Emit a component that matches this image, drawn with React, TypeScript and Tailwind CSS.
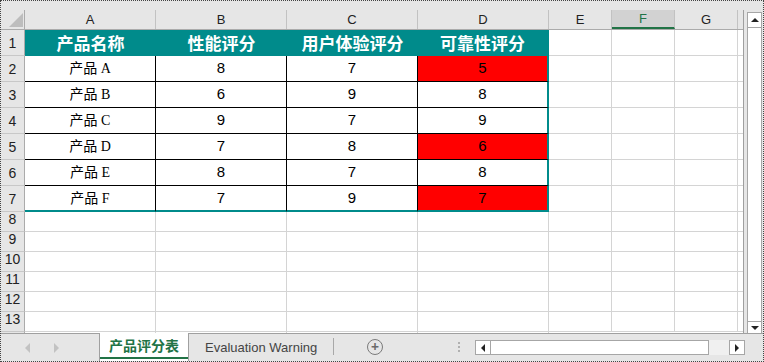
import React from "react";

const cols = [
    { name: "A", w: "w-[131px]" },
    { name: "B", w: "w-[131px]" },
    { name: "C", w: "w-[131px]" },
    { name: "D", w: "w-[131px]" },
    { name: "E", w: "w-[63px]" },
    { name: "F", w: "w-[63px]" },
    { name: "G", w: "w-[63px]" },
];

const headers = ["产品名称", "性能评分", "用户体验评分", "可靠性评分"];

const rows = [
    { name: "产品 A", p: 8, u: 7, r: 5, bad: true },
    { name: "产品 B", p: 6, u: 9, r: 8, bad: false },
    { name: "产品 C", p: 9, u: 7, r: 9, bad: false },
    { name: "产品 D", p: 7, u: 8, r: 6, bad: true },
    { name: "产品 E", p: 8, u: 7, r: 8, bad: false },
    { name: "产品 F", p: 7, u: 9, r: 7, bad: true },
];

const sans = "font-['Liberation_Sans','Noto_Sans_CJK_SC',sans-serif]";
const cjk = "font-['Noto_Sans_CJK_SC',sans-serif]";

const RowHead: React.FC<{ n?: number; h: string }> = ({ n, h }) => (
    <div className={`w-[24px] ${h} shrink-0 bg-[#e6e6e6] border-r border-r-[#ababab] border-b border-b-[#c8c8c8] flex items-end justify-center pb-[1px] text-[14px] text-[#222] ${sans}`}>
        {n}
    </div>
);

const EmptyCells: React.FC = () => (
    <>
        {cols.slice(4).map((c) => (
            <div key={c.name} className={`${c.w} shrink-0 border-r border-b border-[#d4d4d4] bg-white`} />
        ))}
        <div className="flex-1 border-b border-[#d4d4d4] bg-white" />
    </>
);

const App: React.FC = () => {
    return (
        <div className="w-[764px] h-[362px] border border-dotted border-[#444] bg-[#e6e6e6] flex flex-col overflow-hidden">
            <div className="h-[9px] shrink-0" />
            <div className="flex h-[323px] shrink-0">
                {/* Grid */}
                <div className="w-[743px] shrink-0 flex flex-col overflow-hidden border-r border-r-[#9f9f9f] bg-white">
                    {/* column letters */}
                    <div className="flex h-[20px] shrink-0 bg-[#e6e6e6] border-b border-b-[#ababab]">
                        <div className="w-[24px] shrink-0 border-r border-r-[#ababab] relative">
                            <div className="absolute right-[1px] bottom-[2px] w-0 h-0 border-l-[14px] border-l-transparent border-b-[14px] border-b-[#bdbdbd]" />
                        </div>
                        {cols.map((c) => (
                            <div
                                key={c.name}
                                className={`${c.w} shrink-0 border-r border-r-[#c2c2c2] flex items-center justify-center text-[13px] ${sans} ${
                                    c.name === "F" ? "bg-[#d2d2d2] text-[#217346] border-b-2 border-b-[#217346]" : "text-[#222]"
                                }`}
                            >
                                {c.name}
                            </div>
                        ))}
                        <div className="flex-1" />
                    </div>

                    {/* row 1 header */}
                    <div className="flex h-[26px] shrink-0">
                        <RowHead n={1} h="h-[26px]" />
                        {headers.map((t, i) => (
                            <div
                                key={t}
                                className={`w-[131px] shrink-0 bg-[#008b8b] flex items-center justify-center text-white font-bold text-[17px] ${cjk} ${
                                    i === 3 ? "border-r-2 border-r-[#008b8b]" : ""
                                }`}
                            >
                                {t}
                            </div>
                        ))}
                        <EmptyCells />
                    </div>

                    {/* data rows */}
                    {rows.map((r, idx) => {
                        const last = idx === rows.length - 1;
                        const bb = last ? "border-b-2 border-b-[#008b8b]" : "border-b border-b-black";
                        return (
                            <div key={r.name} className="flex h-[26px] shrink-0">
                                <RowHead n={idx + 2} h="h-[26px]" />
                                <div className={`w-[131px] shrink-0 flex items-center justify-center border-r border-r-black ${bb} text-[14px] text-black font-['Liberation_Serif','Noto_Sans_CJK_SC',serif]`}>
                                    {r.name}
                                </div>
                                <div className={`w-[131px] shrink-0 flex items-center justify-center border-r border-r-black ${bb} text-[15px] text-black ${sans}`}>
                                    {r.p}
                                </div>
                                <div className={`w-[131px] shrink-0 flex items-center justify-center border-r border-r-black ${bb} text-[15px] text-black ${sans}`}>
                                    {r.u}
                                </div>
                                <div
                                    className={`w-[131px] shrink-0 flex items-center justify-center border-r-2 border-r-[#008b8b] ${bb} text-[15px] text-black ${sans} ${
                                        r.bad ? "bg-[#ff0000]" : "bg-white"
                                    }`}
                                >
                                    {r.r}
                                </div>
                                <EmptyCells />
                            </div>
                        );
                    })}

                    {/* empty rows */}
                    {[8, 9, 10, 11, 12, 13].map((n) => (
                        <div key={n} className="flex h-[20px] shrink-0">
                            <RowHead n={n} h="h-[20px]" />
                            {cols.slice(0, 4).map((c) => (
                                <div key={c.name} className={`${c.w} shrink-0 border-r border-b border-[#d4d4d4]`} />
                            ))}
                            <EmptyCells />
                        </div>
                    ))}
                    <div className="flex flex-1">
                        <RowHead h="h-full" />
                        {cols.slice(0, 4).map((c) => (
                            <div key={c.name} className={`${c.w} shrink-0 border-r border-[#d4d4d4]`} />
                        ))}
                    </div>
                </div>

                <div className="w-[3px] shrink-0" />

                {/* vertical scrollbar */}
                <div className="w-[15px] shrink-0 mt-[2px] h-[322px] flex flex-col border-x border-[#a6a6a6] bg-white">
                    <div className="h-[16px] shrink-0 border border-[#a6a6a6] -mx-[1px] flex items-center justify-center bg-white">
                        <div className="w-0 h-0 border-l-[4px] border-r-[4px] border-b-[4px] border-l-transparent border-r-transparent border-b-[#222]" />
                    </div>
                    <div className="flex-1" />
                    <div className="h-[13px] shrink-0 border border-[#a6a6a6] -mx-[1px] flex items-center justify-center bg-white">
                        <div className="w-0 h-0 border-l-[4px] border-r-[4px] border-t-[4px] border-l-transparent border-r-transparent border-t-[#222]" />
                    </div>
                </div>
            </div>

            {/* tab bar */}
            <div className="flex h-[28px] shrink-0 border-t border-t-[#a0a0a0] bg-[#e6e6e6] items-stretch">
                <div className="w-[98px] shrink-0 flex items-center">
                    <div className="ml-[24px] w-0 h-0 border-t-[5px] border-b-[5px] border-r-[5px] border-t-transparent border-b-transparent border-r-[#c2c2c2]" />
                    <div className="ml-[24px] w-0 h-0 border-t-[5px] border-b-[5px] border-l-[5px] border-t-transparent border-b-transparent border-l-[#c2c2c2]" />
                </div>
                <div className="w-[90px] shrink-0 -mt-[1px] bg-white border-x border-[#a0a0a0] flex flex-col">
                    <div className={`flex-1 flex items-center justify-center text-[14px] font-bold text-[#217346] ${cjk}`}>产品评分表</div>
                    <div className="h-[2px] mb-[2px] bg-[#217346]" />
                </div>
                <div className={`w-[144px] shrink-0 flex items-center pl-[16px] text-[13px] text-[#444] ${sans}`}>Evaluation Warning</div>
                <div className="w-[1px] shrink-0 mt-[4px] mb-[6px] bg-[#a8a8a8]" />
                <div className="w-[33px] shrink-0" />
                <div className="w-[16px] h-[16px] self-center -mt-[2px] rounded-full border border-[#7a7a7a] flex items-center justify-center text-[#6a6a6a] text-[14px] leading-none font-bold">
                    +
                </div>
                <div className="w-[75px] shrink-0" />
                <div className="flex flex-col gap-[2px] self-center -mt-[2px] mr-[15px]">
                    <div className="w-[2px] h-[2px] bg-[#b0b0b0]" />
                    <div className="w-[2px] h-[2px] bg-[#b0b0b0]" />
                    <div className="w-[2px] h-[2px] bg-[#b0b0b0]" />
                </div>
                {/* horizontal scrollbar */}
                <div className="w-[270px] shrink-0 h-[15px] mt-[6px] flex bg-[#f0f0f0]">
                    <div className="w-[16px] shrink-0 border border-[#a6a6a6] bg-white flex items-center justify-center">
                        <div className="w-0 h-0 border-t-[4px] border-b-[4px] border-r-[4px] border-t-transparent border-b-transparent border-r-[#222]" />
                    </div>
                    <div className="w-[218px] shrink-0 border-y border-r border-[#a6a6a6] bg-white" />
                    <div className="flex-1" />
                    <div className="w-[16px] shrink-0 border border-[#a6a6a6] bg-white flex items-center justify-center">
                        <div className="w-0 h-0 border-t-[4px] border-b-[4px] border-l-[4px] border-t-transparent border-b-transparent border-l-[#222]" />
                    </div>
                </div>
            </div>
        </div>
    );
};

export default App;
